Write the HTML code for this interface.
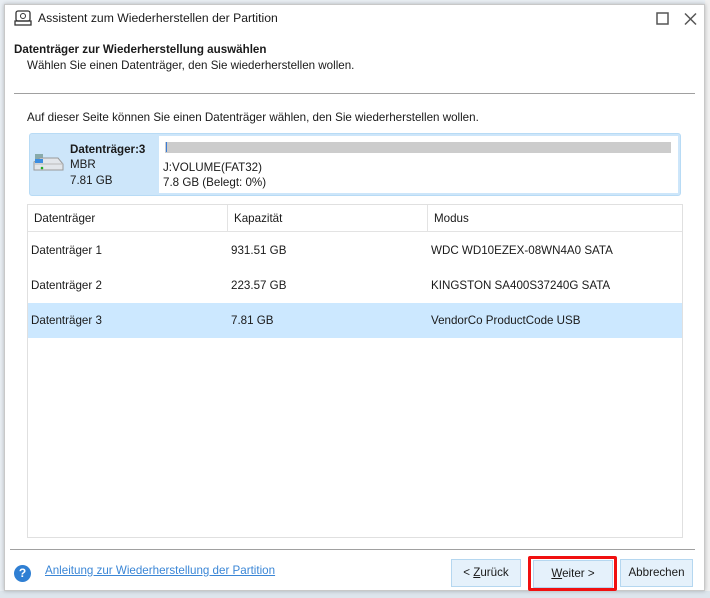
<!DOCTYPE html>
<html><head><style>
*{margin:0;padding:0;box-sizing:border-box}
body{width:710px;height:598px;background:#e9eef3;font-family:"Liberation Sans",sans-serif;font-size:11.6px;color:#1a1a1a;position:relative;overflow:hidden}
.a{position:absolute}
.dlg{left:4px;top:4px;width:701px;height:587px;background:#fff;border:1px solid #c8c8c8;box-shadow:0 0 4px rgba(0,0,0,.25)}
.btn{position:absolute;top:559px;height:28px;background:#e5f1fb;border:1px solid #b5d7f0;text-align:center;line-height:26px;font-size:11.6px}
</style></head><body>
<div class="a" style="left:705px;top:0;width:5px;height:598px;background:#f0f0f0"></div>
<div class="a" style="left:0;top:591px;width:710px;height:7px;background:#dde5ec"></div>
<div class="a dlg"></div>
<svg class="a" style="left:14px;top:10px" width="18" height="16" viewBox="0 0 18 16"><rect x="2" y="1" width="14" height="10" rx="2" fill="none" stroke="#333" stroke-width="1.3"/><rect x="1" y="11" width="16" height="4" fill="none" stroke="#333" stroke-width="1.3"/><circle cx="9" cy="6" r="2.5" fill="none" stroke="#333"/></svg>
<div class="a" style="left:38px;top:11px;font-size:12.2px">Assistent zum Wiederherstellen der Partition</div>
<svg class="a" style="left:656px;top:12px" width="42" height="14" viewBox="0 0 42 14"><rect x="1" y="1" width="11" height="11" fill="none" stroke="#555" stroke-width="1.5"/><path d="M29 1.5 L40 12.5 M40 1.5 L29 12.5" stroke="#555" stroke-width="1.5"/></svg>
<div class="a" style="left:14px;top:43px;font-weight:bold;font-size:11.6px">Datenträger zur Wiederherstellung auswählen</div>
<div class="a" style="left:27px;top:59px">Wählen Sie einen Datenträger, den Sie wiederherstellen wollen.</div>
<div class="a" style="left:14px;top:93px;width:681px;height:1px;background:#a0a0a0"></div>
<div class="a" style="left:27px;top:111px">Auf dieser Seite können Sie einen Datenträger wählen, den Sie wiederherstellen wollen.</div>
<div class="a" style="left:29px;top:133px;width:652px;height:63px;background:#cde6fa;border:1px solid #b8dbf5;border-radius:3px"></div>
<div class="a" style="left:159px;top:136px;width:519px;height:57px;background:#fff"></div>
<div class="a" style="left:165px;top:142px;width:506px;height:11px;background:#cccccc"></div>
<div class="a" style="left:166px;top:142px;width:1px;height:10px;background:#3a7bd5"></div>
<svg class="a" style="left:32px;top:152px" width="32" height="22" viewBox="0 0 32 22"><rect x="3" y="2" width="8" height="5" fill="#8aa"/><path d="M2 10 L8 6 H26 L31 12 V18 H2Z" fill="#e2e6ea" stroke="#999"/><path d="M2 12 H31" stroke="#bbb"/><circle cx="10" cy="16" r="1.3" fill="#2a2"/><rect x="3" y="7" width="8" height="4" fill="#3b8de0"/></svg>
<div class="a" style="left:70px;top:143px;font-weight:bold">Datenträger:3</div>
<div class="a" style="left:70px;top:158px">MBR</div>
<div class="a" style="left:70px;top:174px">7.81 GB</div>
<div class="a" style="left:163px;top:161px">J:VOLUME(FAT32)</div>
<div class="a" style="left:163px;top:176px">7.8 GB (Belegt: 0%)</div>
<div class="a" style="left:27px;top:204px;width:656px;height:334px;border:1px solid #e0e0e0"></div>
<div class="a" style="left:28px;top:205px;width:654px;height:27px;border-bottom:1px solid #e3e3e3"></div>
<div class="a" style="left:227px;top:205px;width:1px;height:27px;background:#e3e3e3"></div>
<div class="a" style="left:427px;top:205px;width:1px;height:27px;background:#e3e3e3"></div>
<div class="a" style="left:34px;top:212px">Datenträger</div>
<div class="a" style="left:234px;top:212px">Kapazität</div>
<div class="a" style="left:434px;top:212px">Modus</div>
<div class="a" style="left:28px;top:303px;width:654px;height:35px;background:#cce8ff"></div>
<div class="a" style="left:31px;top:244px">Datenträger 1</div><div class="a" style="left:231px;top:244px">931.51 GB</div><div class="a" style="left:431px;top:244px">WDC WD10EZEX-08WN4A0 SATA</div>
<div class="a" style="left:31px;top:279px">Datenträger 2</div><div class="a" style="left:231px;top:279px">223.57 GB</div><div class="a" style="left:431px;top:279px">KINGSTON SA400S37240G SATA</div>
<div class="a" style="left:31px;top:314px">Datenträger 3</div><div class="a" style="left:231px;top:314px">7.81 GB</div><div class="a" style="left:431px;top:314px">VendorCo ProductCode USB</div>
<div class="a" style="left:10px;top:549px;width:685px;height:1px;background:#a0a0a0"></div>
<div class="a" style="left:14px;top:565px;width:17px;height:17px;border-radius:50%;background:#2f7fd3;color:#fff;font-weight:bold;font-size:12px;text-align:center;line-height:17px">?</div>
<div class="a" style="left:45px;top:564px;color:#3a86d6;text-decoration:underline">Anleitung zur Wiederherstellung der Partition</div>
<div class="btn" style="left:451px;width:70px"><span>&lt; <u>Z</u>urück</span></div>
<div class="a" style="left:528px;top:556px;width:89px;height:35px;border:3px solid #f01010;border-radius:2px"></div>
<div class="btn" style="left:533px;width:80px;top:560px"><u>W</u>eiter &gt;</div>
<div class="btn" style="left:620px;width:73px">Abbrechen</div>
</body></html>
